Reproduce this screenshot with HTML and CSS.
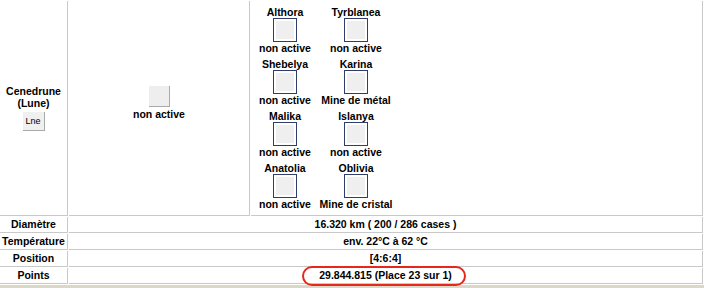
FILE: index.html
```html
<!DOCTYPE html>
<html lang="fr">
<head>
  <meta charset="UTF-8" />
  <title>Planète</title>
  <link rel="stylesheet" href="styles.css">
</head>
<body>
  <div class="planet">
    <div class="cell moon">
      <div class="moon-name">Cenedrune<br>(Lune)</div>
      <div class="moon-img">Lne</div>
    </div>

    <div class="cell field">
      <div class="field-box"></div>
      <div class="field-state">non active</div>
    </div>

    <div class="cell slots">
      <div class="slot-grid">
        <div class="slot">
          <div class="slot-name">Althora</div>
          <div class="slot-box"><span></span></div>
          <div class="slot-state">non active</div>
        </div>
        <div class="slot">
          <div class="slot-name">Tyrblanea</div>
          <div class="slot-box"><span></span></div>
          <div class="slot-state">non active</div>
        </div>
        <div class="slot">
          <div class="slot-name">Shebelya</div>
          <div class="slot-box"><span></span></div>
          <div class="slot-state">non active</div>
        </div>
        <div class="slot">
          <div class="slot-name">Karina</div>
          <div class="slot-box"><span></span></div>
          <div class="slot-state">Mine de métal</div>
        </div>
        <div class="slot">
          <div class="slot-name">Malika</div>
          <div class="slot-box"><span></span></div>
          <div class="slot-state">non active</div>
        </div>
        <div class="slot">
          <div class="slot-name">Islanya</div>
          <div class="slot-box"><span></span></div>
          <div class="slot-state">non active</div>
        </div>
        <div class="slot">
          <div class="slot-name">Anatolia</div>
          <div class="slot-box"><span></span></div>
          <div class="slot-state">non active</div>
        </div>
        <div class="slot">
          <div class="slot-name">Oblivia</div>
          <div class="slot-box"><span></span></div>
          <div class="slot-state">Mine de cristal</div>
        </div>
      </div>
    </div>

    <div class="cell label">Diamètre</div>
    <div class="cell value">16.320 km ( 200 / 286 cases )</div>

    <div class="cell label">Température</div>
    <div class="cell value">env. 22°C à 62 °C</div>

    <div class="cell label">Position</div>
    <div class="cell value">[4:6:4]</div>

    <div class="cell label">Points</div>
    <div class="cell value"><span class="points">29.844.815 (Place 23 sur 1)</span></div>
  </div>

  <div class="footer"></div>
</body>
</html>
```

FILE: styles.css
```css
:root {
  --cell-border: #c9c9c9;
  --slot-border: #2e3d6c;
  --slot-fill: #efefef;
  --font: "Liberation Sans", Arial, sans-serif;
}

body {
  margin: 0;
  padding-top: 1px;
  background-color: #fff;
  font-family: var(--font);
  font-size: 10.5px;
  font-weight: bold;
  color: #000;
}

.planet {
  display: grid;
  grid-template-columns: 68px 181px 452px;
  grid-template-rows: 215px repeat(4, 16px);
  gap: 1px;
  width: 703px;
}

.cell {
  box-sizing: border-box;
  border-right: 1px solid var(--cell-border);
  border-bottom: 1px solid var(--cell-border);
  text-align: center;
  line-height: 15px;
}

/* lune */
.moon {
  display: flex;
  flex-direction: column;
  align-items: center;
  justify-content: center;
}

.moon-name {
  line-height: 12px;
}

.moon-img {
  box-sizing: border-box;
  width: 22px;
  height: 19px;
  margin-top: 3px;
  padding-left: 3px;
  background-color: #f0f0f0;
  border-right: 1px solid #a9a9a9;
  border-bottom: 1px solid #a9a9a9;
  font-size: 9px;
  font-weight: normal;
  line-height: 18px;
  text-align: left;
  overflow: hidden;
}

/* champ */
.field {
  display: flex;
  flex-direction: column;
  align-items: center;
  justify-content: center;
  padding-bottom: 10px;
}

.field-box {
  width: 20px;
  height: 20px;
  background-color: #eee;
  border-right: 1px solid #a9a9a9;
  border-bottom: 1px solid #a9a9a9;
}

.field-state {
  line-height: 13px;
  margin-top: 1px;
}

/* emplacements */
.slots {
  display: flex;
  align-items: center;
  padding-bottom: 1px;
}

.slot-grid {
  display: grid;
  grid-template-columns: 68px 68px;
  column-gap: 3px;
  row-gap: 4px;
}

.slot {
  display: flex;
  flex-direction: column;
  align-items: center;
  white-space: nowrap;
}

.slot-name,
.slot-state {
  line-height: 12px;
}

.slot-box {
  box-sizing: border-box;
  width: 24px;
  height: 24px;
  padding: 2px;
  border: 1px solid var(--slot-border);
  background-color: #fff;
}

.slot-box span {
  display: block;
  width: 100%;
  height: 100%;
  background-color: var(--slot-fill);
}

.value {
  grid-column: 2 / 4;
}

.points {
  position: relative;
}

.points::after {
  content: "";
  position: absolute;
  top: -3px;
  bottom: -5px;
  left: -17px;
  right: -14px;
  border: 2px solid #e6281c;
  border-radius: 11px;
}

.footer {
  height: 4px;
  margin-top: 1px;
  background-color: #dcd8c8;
}
```
